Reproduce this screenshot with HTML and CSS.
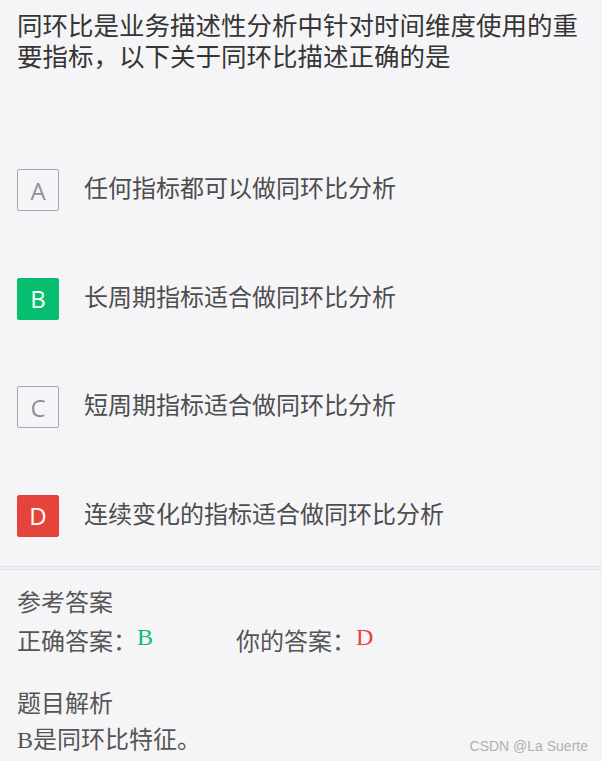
FILE: index.html
```html
<!DOCTYPE html>
<html lang="zh-CN">
<head>
  <meta charset="UTF-8">
  <meta name="viewport" content="width=device-width, initial-scale=1.0">
  <title>同环比练习</title>
  <link rel="stylesheet" href="styles.css">
</head>
<body>
  <div class="question">
    <div class="question-title">同环比是业务描述性分析中针对时间维度使用的重要指标，以下关于同环比描述正确的是</div>

    <div class="options">
      <div class="option">
        <span class="letter">A</span>
        <span class="option-text">任何指标都可以做同环比分析</span>
      </div>
      <div class="option">
        <span class="letter right">B</span>
        <span class="option-text">长周期指标适合做同环比分析</span>
      </div>
      <div class="option">
        <span class="letter">C</span>
        <span class="option-text">短周期指标适合做同环比分析</span>
      </div>
      <div class="option">
        <span class="letter wrong">D</span>
        <span class="option-text">连续变化的指标适合做同环比分析</span>
      </div>
    </div>
  </div>

  <div class="divider"></div>

  <div class="answer">
    <div class="label">参考答案</div>
    <div class="answer-row">
      <div class="answer-item">正确答案：<span class="mark green">B</span></div>
      <div class="answer-item">你的答案：<span class="mark red">D</span></div>
    </div>

    <div class="label analysis-label">题目解析</div>
    <div class="analysis"><span class="latin">B</span>是同环比特征。</div>
  </div>

  <div class="watermark">CSDN @La Suerte</div>
</body>
</html>
```

FILE: styles.css
```css
body {
  margin: 0;
  padding: 0;
  background-color: #f5f5f7;
  font-family: "Noto Sans CJK SC", "Noto Sans", sans-serif;
  color: #4a4a4a;
  position: relative;
  min-height: 761px;
}

.question {
  padding: 8px 17px 0;
}

.question-title {
  font-size: 25.5px;
  line-height: 31px;
  color: #353535;
}

.options {
  display: flex;
  flex-direction: column;
  gap: 66.5px;
  margin-top: 99px;
}

.option {
  display: flex;
  align-items: center;
  gap: 25px;
}

.letter {
  width: 42px;
  height: 42px;
  box-sizing: border-box;
  border: 1px solid #a3a7ae;
  border-radius: 2px;
  display: flex;
  justify-content: center;
  align-items: center;
  font-family: "Open Sans", "Noto Sans", sans-serif;
  font-size: 24px;
  color: #8c9099;
}

.letter.right {
  background-color: #07be6e;
  border-color: #07be6e;
  color: #fff;
}

.letter.wrong {
  background-color: #e5443c;
  border-color: #e5443c;
  color: #fff;
}

.option-text {
  font-size: 24px;
  line-height: 32px;
  padding-bottom: 6px;
  color: #4d4d4d;
}

.divider {
  margin-top: 29px;
  height: 2px;
  border-top: 1px solid #e3e2e9;
  border-bottom: 1px solid #e3e2e9;
}

.answer {
  padding: 13px 17px 0;
  font-size: 24px;
  line-height: 36px;
  color: #555;
}

.answer-row {
  display: flex;
}

.answer-item {
  width: 219px;
}

.mark {
  font-family: "Liberation Serif", serif;
  vertical-align: 5px;
}

.green {
  color: #07be6e;
}

.red {
  color: #e5443c;
}

.analysis-label {
  margin-top: 26px;
}

.analysis {
  margin-top: 0;
}

.latin {
  font-family: "Liberation Serif", serif;
}

.watermark {
  position: absolute;
  right: 14px;
  bottom: 7px;
  font-family: "Liberation Sans", sans-serif;
  font-size: 14px;
  color: #b0b0b0;
}
```
